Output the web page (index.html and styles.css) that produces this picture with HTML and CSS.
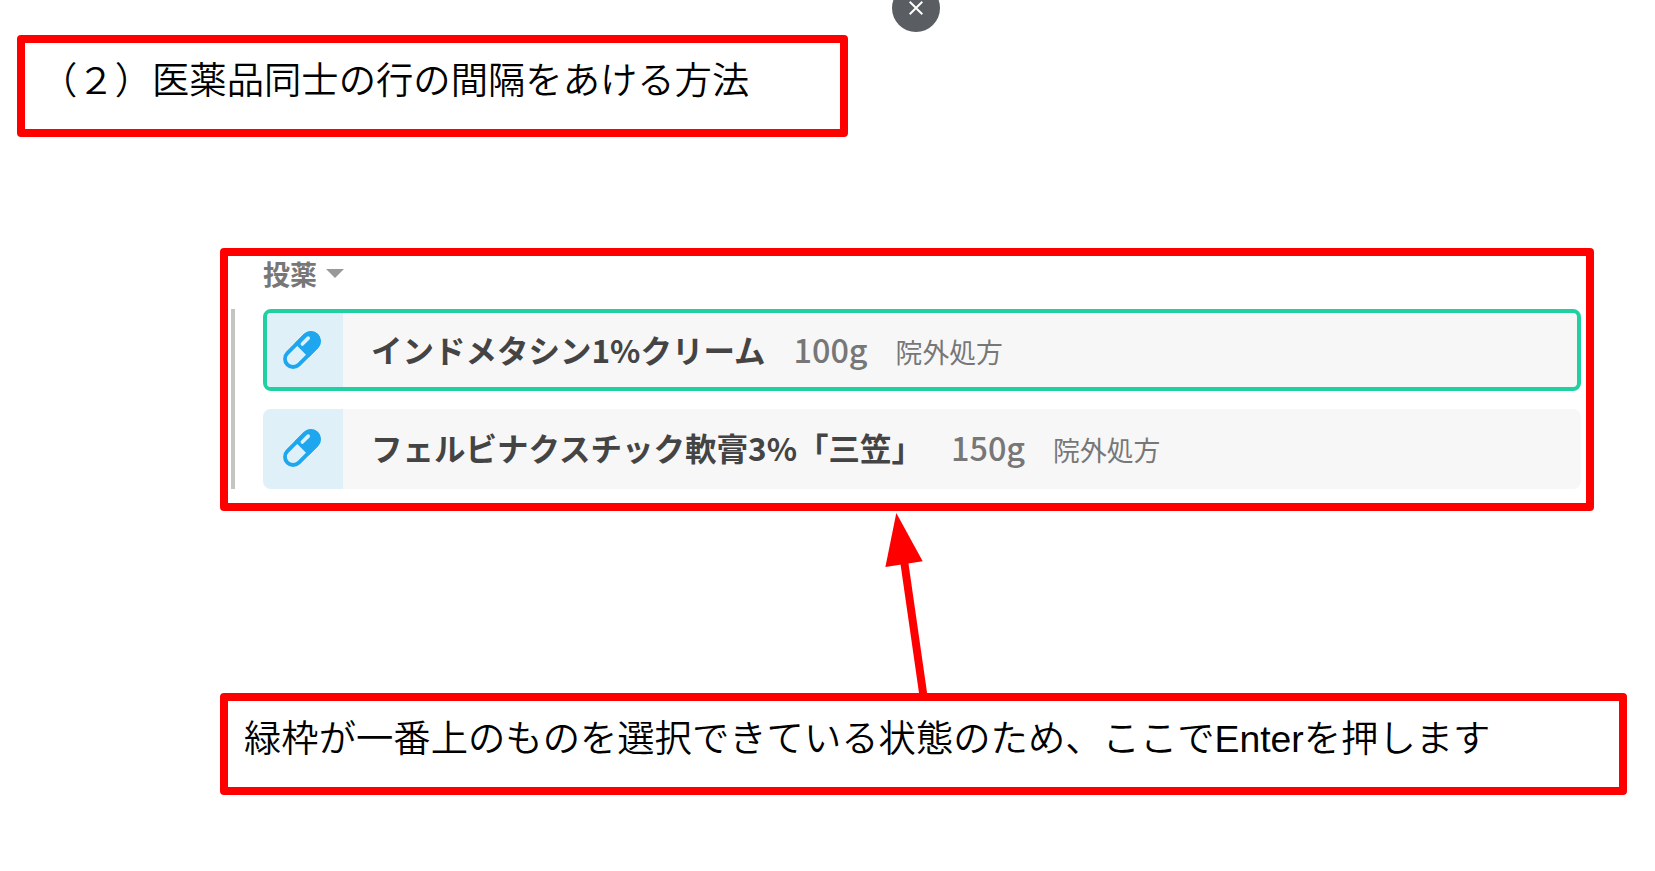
FILE: index.html
```html
<!DOCTYPE html>
<html lang="ja">
<head>
<meta charset="utf-8">
<title>医薬品同士の行の間隔をあける方法</title>
<link rel="stylesheet" href="styles.css">
</head>
<body>
<button class="close" aria-label="閉じる">
  <svg width="14" height="14" viewBox="0 0 14 14"><path d="M.7 .7L13.3 13.3M13.3 .7L.7 13.3"/></svg>
</button>
<main class="page">
  <h1 class="frame title">（<span class="digit">２</span>）医薬品同士の行の間隔をあける方法</h1>
  <section class="frame panel">
    <header class="group">投薬<svg class="caret" width="18" height="9" viewBox="0 0 18 9"><path d="M0 0H18L9 9Z"/></svg></header>
    <div class="list">
      <article class="row selected">
        <div class="icon"><svg width="38" height="38" viewBox="0 0 38 38"><use href="#pill"/></svg></div>
        <div class="text"><b class="name">インドメタシン1%クリーム</b><span class="dose">100g</span><span class="kind">院外処方</span></div>
      </article>
      <article class="row">
        <div class="icon"><svg width="38" height="38" viewBox="0 0 38 38">
          <g id="pill" transform="rotate(45 19 19)">
            <rect class="shell" x="10.9" y="-1.7" width="16.2" height="41.4" rx="8.1"/>
            <path class="cap" d="M9 19.5V6.5a10 10 0 0 1 20 0v13Z"/>
            <path class="shine" d="M15 14.5V6.2"/>
          </g></svg></div>
        <div class="text"><b class="name">フェルビナクスチック軟膏3%「三笠」</b><span class="dose">150g</span><span class="kind">院外処方</span></div>
      </article>
    </div>
  </section>
  <svg class="arrow" width="46" height="182" viewBox="0 0 46 182"><path class="stem" d="M18.8 48L39.2 190"/><path class="head" d="M11.3 2L37.7 50.3L.4 56Z"/></svg>
  <p class="frame note">緑枠が一番上のものを選択できている状態のため、ここで<span class="key">Enter</span>を押します</p>
</main>
</body>
</html>
```
FILE: styles.css
```css
* { box-sizing: border-box; }
body {
  margin: 0;
  height: 871px;
  overflow: hidden;
  background: #fff;
  font-family: "Noto Sans CJK JP", sans-serif;
}
.close {
  position: absolute;
  top: -16px;
  left: 892px;
  width: 48px;
  height: 48px;
  padding: 0;
  border: 0;
  border-radius: 50%;
  background: #5a5d61;
  display: flex;
  align-items: center;
  justify-content: center;
}
.close path { stroke: #fff; stroke-width: 2; }
.page {
  display: flex;
  flex-direction: column;
  align-items: flex-start;
  padding: 35px 0 0 17px;
}
.frame {
  margin: 0;
  border: 8px solid #f00;
  border-radius: 4px;
}
.title, .note {
  height: 102px;
  color: #000;
  font-family: "Liberation Sans", "Noto Sans CJK JP DemiLight", "Noto Sans CJK JP", sans-serif;
  font-weight: 350;
  font-size: 37.33px;
  line-height: 54px;
  white-space: nowrap;
}
.digit { font-weight: 400; }
.title { width: 831px; padding: 11px 0 0 15px; }
.note { width: 1407px; margin-left: 203px; padding: 11px 0 0 16px; }
.panel {
  width: 1374px;
  height: 263px;
  margin: 111px 0 0 203px;
  padding: 1px 5px 0 3px;
}
.group {
  display: flex;
  align-items: center;
  gap: 9px;
  height: 52px;
  padding: 0 0 19px 32px;
  color: #777;
  font-size: 27px;
  font-weight: 700;
}
.caret { fill: #999; }
.list {
  display: flex;
  flex-direction: column;
  gap: 18px;
  border-left: 4px solid #c4c4c4;
  padding-left: 28px;
}
.row {
  display: flex;
  height: 80px;
  overflow: hidden;
  border-radius: 8px;
  background: #f7f7f7;
}
.icon {
  flex: none;
  width: 80px;
  background: #dff0f8;
  display: flex;
  align-items: center;
  justify-content: center;
  padding: 0 3px 2px 0;
}
.selected { height: 82px; border: 4px solid #20d0a0; }
.selected .icon { width: 76px; padding: 0 7px 0 0; }
.shell { fill: none; stroke: #1ea7ee; stroke-width: 3.8; }
.icon svg { overflow: visible; }
.cap { fill: #1ea7ee; }
.shine { stroke: #dff0f8; stroke-width: 3.6; stroke-linecap: round; }
.text {
  display: flex;
  align-items: baseline;
  padding-left: 28px;
  line-height: 76px;
  white-space: nowrap;
  font-size: 31.5px;
}
.selected .text { line-height: 72px; }
.name { color: #444; }
.dose { margin-left: 28px; color: #777; font-size: 32.4px; font-weight: 500; }
.kind { margin-left: 28px; color: #777; font-size: 26.8px; }
.arrow { margin: 0 0 0 868px; display: block; }
.stem { stroke: #f00; stroke-width: 8; }
.head { fill: #f00; }
```
